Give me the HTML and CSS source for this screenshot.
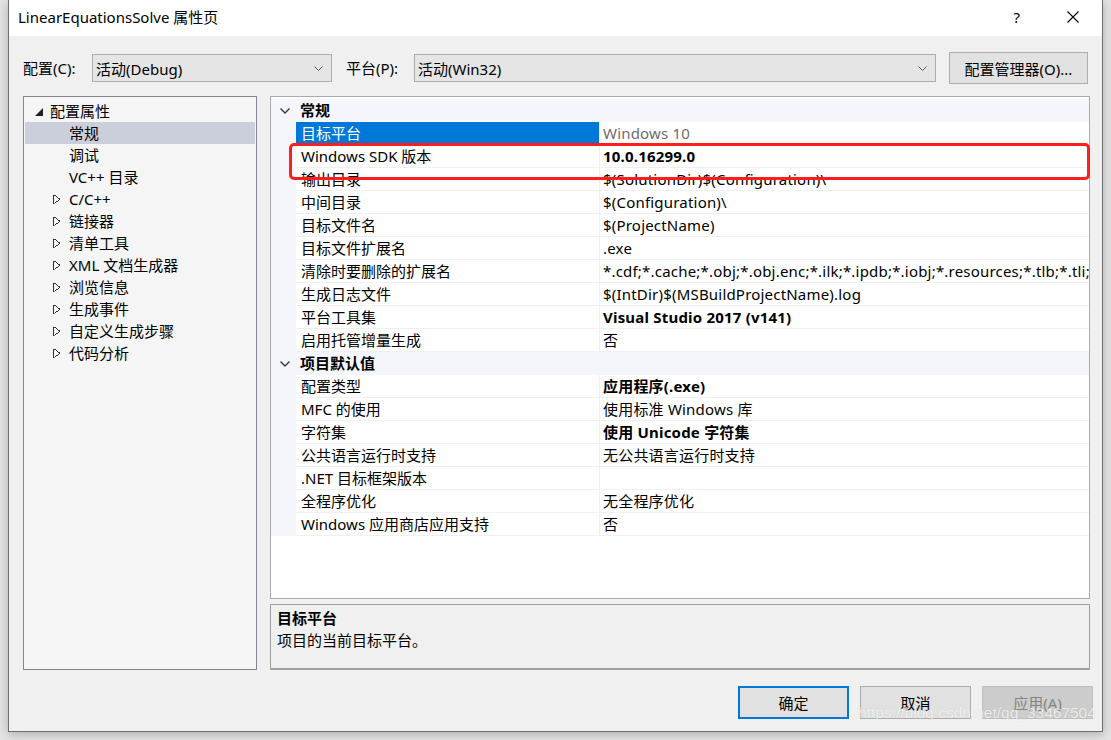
FILE: index.html
```html
<!DOCTYPE html>
<html lang="zh-CN">
<head>
    <meta charset="UTF-8">
    <title>LinearEquationsSolve 属性页</title>
    <link rel="stylesheet" href="styles.css">
</head>
<body>
<div class="dialog">
    <!-- Title bar -->
    <div class="titlebar">
        <span class="title">LinearEquationsSolve 属性页</span>
        <span class="help">?</span>
        <svg class="close" width="12" height="12" viewBox="0 0 12 12">
            <path d="M0.5 0.5 L11.5 11.5 M11.5 0.5 L0.5 11.5" stroke="#000" stroke-width="1.1" fill="none"/>
        </svg>
    </div>

    <div class="body">
        <!-- Config row -->
        <div class="config-row">
            <span class="label">配置(C):</span>
            <div class="combo combo-config">
                <span>活动(Debug)</span>
                <svg width="9" height="5" viewBox="0 0 9 5"><path d="M0.5 0.5 L4.5 4.5 L8.5 0.5" stroke="#555" fill="none"/></svg>
            </div>
            <span class="label label-platform">平台(P):</span>
            <div class="combo combo-platform">
                <span>活动(Win32)</span>
                <svg width="9" height="5" viewBox="0 0 9 5"><path d="M0.5 0.5 L4.5 4.5 L8.5 0.5" stroke="#555" fill="none"/></svg>
            </div>
            <button class="btn btn-manager">配置管理器(O)...</button>
        </div>

        <div class="main">
            <!-- Tree -->
            <div class="tree">
                <div class="node root"><span class="exp-open"></span>配置属性</div>
                <div class="node child selected">常规</div>
                <div class="node child">调试</div>
                <div class="node child">VC++ 目录</div>
                <div class="node child"><span class="exp"></span>C/C++</div>
                <div class="node child"><span class="exp"></span>链接器</div>
                <div class="node child"><span class="exp"></span>清单工具</div>
                <div class="node child"><span class="exp"></span>XML 文档生成器</div>
                <div class="node child"><span class="exp"></span>浏览信息</div>
                <div class="node child"><span class="exp"></span>生成事件</div>
                <div class="node child"><span class="exp"></span>自定义生成步骤</div>
                <div class="node child"><span class="exp"></span>代码分析</div>
            </div>

            <div class="right">
                <!-- Property grid -->
                <div class="grid">
                    <div class="cat"><span class="chev"><svg width="10" height="6" viewBox="0 0 10 6"><path d="M0.5 0.5 L5 5 L9.5 0.5" stroke="#333" stroke-width="1.3" fill="none"/></svg></span>常规</div>
                    <div class="prop sel"><span class="name">目标平台</span><span class="val dim">Windows 10</span></div>
                    <div class="prop"><span class="name">Windows SDK 版本</span><span class="val bold">10.0.16299.0</span></div>
                    <div class="prop"><span class="name">输出目录</span><span class="val">$(SolutionDir)$(Configuration)\</span></div>
                    <div class="prop"><span class="name">中间目录</span><span class="val">$(Configuration)\</span></div>
                    <div class="prop"><span class="name">目标文件名</span><span class="val">$(ProjectName)</span></div>
                    <div class="prop"><span class="name">目标文件扩展名</span><span class="val">.exe</span></div>
                    <div class="prop"><span class="name">清除时要删除的扩展名</span><span class="val">*.cdf;*.cache;*.obj;*.obj.enc;*.ilk;*.ipdb;*.iobj;*.resources;*.tlb;*.tli;*.tlh;*.tmp</span></div>
                    <div class="prop"><span class="name">生成日志文件</span><span class="val">$(IntDir)$(MSBuildProjectName).log</span></div>
                    <div class="prop"><span class="name">平台工具集</span><span class="val bold">Visual Studio 2017 (v141)</span></div>
                    <div class="prop"><span class="name">启用托管增量生成</span><span class="val">否</span></div>
                    <div class="cat"><span class="chev"><svg width="10" height="6" viewBox="0 0 10 6"><path d="M0.5 0.5 L5 5 L9.5 0.5" stroke="#333" stroke-width="1.3" fill="none"/></svg></span>项目默认值</div>
                    <div class="prop"><span class="name">配置类型</span><span class="val bold">应用程序(.exe)</span></div>
                    <div class="prop"><span class="name">MFC 的使用</span><span class="val">使用标准 Windows 库</span></div>
                    <div class="prop"><span class="name">字符集</span><span class="val bold">使用 Unicode 字符集</span></div>
                    <div class="prop"><span class="name">公共语言运行时支持</span><span class="val">无公共语言运行时支持</span></div>
                    <div class="prop"><span class="name">.NET 目标框架版本</span><span class="val"></span></div>
                    <div class="prop"><span class="name">全程序优化</span><span class="val">无全程序优化</span></div>
                    <div class="prop"><span class="name">Windows 应用商店应用支持</span><span class="val">否</span></div>

                    <div class="highlight"></div>
                </div>

                <!-- Description -->
                <div class="desc">
                    <div class="desc-title">目标平台</div>
                    <div class="desc-text">项目的当前目标平台。</div>
                </div>
            </div>
        </div>

        <!-- Footer buttons -->
        <div class="footer">
            <button class="btn btn-ok">确定</button>
            <button class="btn">取消</button>
            <button class="btn btn-disabled">应用(A)</button>
        </div>
    </div>
</div>
<div class="watermark">https://blog.csdn.net/qq_33467504</div>
</body>
</html>
```

FILE: styles.css
```css
body {
    margin: 0;
    width: 1111px;
    height: 740px;
    overflow: hidden;
    background-color: #e4e4e4;
    font-family: "Segoe UI", "Noto Sans", "Noto Sans CJK SC", sans-serif;
    font-size: 15px;
    color: #000;
    position: relative;
}

/* Dialog frame */
.dialog {
    margin-left: 8px;
    width: 1093px;
    height: 731px;
    border: 1px solid #6e6e6e;
    border-top: none;
    background-color: #f0f0f0;
    box-shadow: 0 2px 10px rgba(0, 0, 0, 0.25);
    display: flex;
    flex-direction: column;
}

.titlebar {
    height: 38px;
    background-color: #fff;
    display: flex;
    align-items: center;
    padding-left: 9px;
}

.title {
    flex: 1;
    font-size: 15px;
    line-height: 20px;
    margin-top: -2px;
}

.help {
    font-size: 15px;
    margin-right: 47px;
    margin-top: -2px;
}

.close {
    margin-right: 23px;
    margin-top: -2px;
}

.body {
    flex: 1;
    display: flex;
    flex-direction: column;
    padding: 16px 12px 12px 14px;
}

/* Config row */
.config-row {
    display: flex;
    align-items: center;
    height: 32px;
}

.label {
    width: 69px;
    line-height: 20px;
}

.label-platform {
    width: 68px;
    margin-left: 14px;
}

.combo {
    border: 1px solid #adadad;
    background-color: #e5e5e5;
    display: flex;
    align-items: center;
    justify-content: space-between;
    padding: 0 8px 0 3px;
    box-sizing: border-box;
    height: 28px;
}

.combo-config {
    width: 240px;
}

.combo-platform {
    width: 522px;
}

.btn {
    font-family: inherit;
    font-size: 15px;
    background-color: #e1e1e1;
    border: 1px solid #adadad;
    color: #000;
    padding: 0;
    box-sizing: border-box;
}

.btn-manager {
    margin-left: auto;
    width: 139px;
    height: 32px;
    margin-right: 2px;
}

/* Main area */
.main {
    display: flex;
    margin-top: 12px;
    height: 574px;
}

.tree {
    width: 234px;
    box-sizing: border-box;
    border: 1px solid #828790;
    background-color: #f5f5f5;
    padding: 3px 1px;
}

.node {
    height: 22px;
    line-height: 22px;
    display: flex;
    align-items: center;
    white-space: nowrap;
}

.root {
    padding-left: 10px;
}

.child {
    padding-left: 44px;
}

.selected {
    background-color: #cbcedb;
}

.exp-open {
    width: 0;
    height: 0;
    border-left: 8px solid transparent;
    border-bottom: 8px solid #222;
    margin-right: 7px;
    margin-top: 1px;
}

.exp {
    width: 6px;
    height: 9px;
    margin-left: -16px;
    margin-right: 9px;
    background: linear-gradient(to top right, transparent 48%, #333 48%, #333 58%, transparent 58%) top / 100% 50% no-repeat,
                linear-gradient(to bottom right, transparent 48%, #333 48%, #333 58%, transparent 58%) bottom / 100% 50% no-repeat;
    border-left: 1px solid #333;
}

.right {
    margin-left: 13px;
    width: 820px;
    display: flex;
    flex-direction: column;
}

/* Property grid */
.grid {
    position: relative;
    height: 503px;
    box-sizing: border-box;
    border: 1px solid #ababab;
    background-color: #fff;
    padding-top: 2px;
}

.cat {
    height: 23px;
    line-height: 23px;
    background-color: #f4f6fb;
    font-weight: bold;
    display: flex;
    align-items: center;
}

.chev {
    width: 29px;
    display: flex;
    justify-content: center;
    padding-right: 2px;
    box-sizing: border-box;
}

.prop {
    height: 23px;
    display: flex;
    border-left: 25px solid #f4f6fb;
    white-space: nowrap;
}

.name,
.val {
    box-sizing: border-box;
    border-bottom: 1px solid #f0f0f0;
    line-height: 22px;
    overflow: hidden;
}

.name {
    width: 304px;
    padding-left: 5px;
    border-right: 1px solid #f0f0f0;
}

.val {
    flex: 1;
    padding-left: 3px;
    letter-spacing: 0.2px;
}

.sel .name {
    background-color: #0078d7;
    color: #fff;
}

.dim {
    color: #6d6d6d;
}

.bold {
    font-weight: bold;
}

.highlight {
    position: absolute;
    left: 18px;
    top: 46px;
    width: 801px;
    height: 37px;
    box-sizing: border-box;
    border: 3px solid #ff1e1e;
    border-radius: 5px;
}

/* Description panel */
.desc {
    margin-top: 5px;
    flex: 1;
    border: 1px solid #a0a0a0;
    border-bottom-width: 2px;
    padding: 2px 6px;
}

.desc-title {
    font-weight: bold;
    line-height: 22px;
}

.desc-text {
    line-height: 22px;
}

/* Footer */
.footer {
    display: flex;
    justify-content: flex-end;
    gap: 11px;
    margin-top: 16px;
    margin-right: -3px;
}

.footer .btn {
    width: 111px;
    height: 33px;
}

.btn-ok {
    border: 2px solid #0078d7 !important;
}

.btn-disabled {
    background-color: #cccccc;
    border-color: #bfbfbf;
    color: #838383;
}

.watermark {
    position: absolute;
    left: 858px;
    top: 704px;
    font-family: "Liberation Sans", sans-serif;
    font-size: 15.5px;
    color: rgba(255, 255, 255, 0.75);
    text-shadow: 0 0 1px rgba(0, 0, 0, 0.15);
}
```
